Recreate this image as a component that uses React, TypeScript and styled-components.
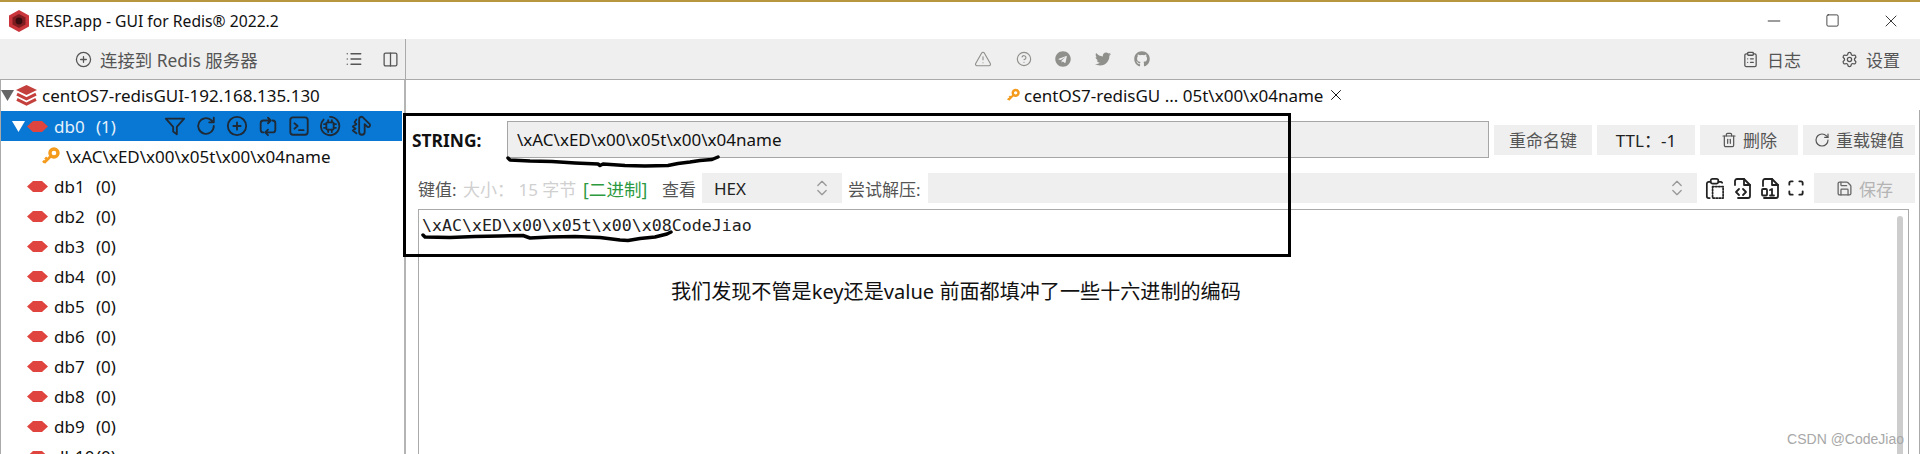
import { ReactNode } from "react";
import styled, { createGlobalStyle } from "styled-components";
import {
  CirclePlus,
  ClipboardList,
  CircleHelp,
  Columns2,
  List,
  Minus,
  RotateCw,
  Save,
  Settings,
  Square,
  Trash2,
  TriangleAlert,
  X,
} from "lucide-react";
import { FaGithub, FaTelegram, FaTwitter } from "react-icons/fa";

const GlobalStyle = createGlobalStyle`
  html, body {
    margin: 0;
    padding: 0;
    background: #fff;
  }
  * {
    box-sizing: border-box;
  }
`;

const FONT = `"Noto Sans", "Noto Sans CJK SC", sans-serif`;

const Page = styled.div`
  position: relative;
  width: 1920px;
  height: 454px;
  overflow: hidden;
  display: flex;
  flex-direction: column;
  background: #fff;
  color: #111;
  font-family: ${FONT};
  font-size: 17px;
`;

const TitleBar = styled.div`
  height: 39px;
  flex: none;
  border-top: 2px solid #b8963f;
  display: flex;
  align-items: center;
  padding-left: 9px;
  gap: 6px;
`;

const TitleText = styled.span`
  font-size: 15.7px;
  flex: 1;
`;

const WindowButtons = styled.div`
  display: flex;
  align-items: center;
  gap: 41px;
  padding-right: 19px;
  color: #111;
`;

const Toolbar = styled.div`
  height: 41px;
  flex: none;
  display: flex;
  background: #efefef;
  border-bottom: 1px solid #aaa;
`;

const ToolbarLeft = styled.div`
  width: 406px;
  flex: none;
  display: flex;
  align-items: center;
  padding-left: 75px;
  border-right: 1px solid #aaa;
  color: #555;
`;

const ConnectLabel = styled.span`
  margin-left: 8px;
  width: 245px;
  font-size: 17.4px;
  white-space: nowrap;
`;

const ToolbarSquare = styled.span`
  display: flex;
  margin-left: 19px;
`;

const ToolbarCenter = styled.div`
  flex: 1;
  display: flex;
  align-items: center;
  gap: 23.5px;
  padding-left: 568px;
  color: #8f8f8c;
`;

const ToolbarRight = styled.div`
  display: flex;
  align-items: center;
  gap: 8px;
  padding-right: 20px;
  color: #555;
`;

const ToolLabel = styled.span<{ $gap?: number }>`
  margin-right: ${(p) => p.$gap ?? 0}px;
`;

const Main = styled.div`
  flex: 1;
  display: flex;
  min-height: 0;
`;

const Sidebar = styled.div`
  width: 406px;
  flex: none;
  border-left: 1px solid #aaa;
  border-right: 2px solid #b4b4b4;
  padding-right: 2px;
  overflow: hidden;
`;

const ServerRow = styled.div`
  height: 31px;
  display: flex;
  align-items: center;
  gap: 2px;
  white-space: nowrap;
`;

const ServerName = styled.span`
  margin-left: 3px;
`;

const TreeRow = styled.div<{ $selected?: boolean; $indent: number }>`
  height: 30px;
  display: flex;
  align-items: center;
  padding-left: ${(p) => p.$indent}px;
  background: ${(p) => (p.$selected ? "#0878d4" : "transparent")};
  color: ${(p) => (p.$selected ? "#e6f1fb" : "#111")};
  white-space: nowrap;
`;

const ArrowSpacer = styled.span`
  width: 2px;
  flex: none;
`;

const DbName = styled.span`
  margin-left: 6px;
  width: 42px;
`;

const RowActions = styled.div`
  margin-left: 48px;
  display: flex;
  align-items: center;
  gap: 9px;
  color: #1f2a36;
`;

const KeyName = styled.span`
  margin-left: 6px;
`;

const Panel = styled.div`
  flex: 1;
  min-width: 0;
  display: flex;
  flex-direction: column;
`;

const TabRow = styled.div`
  height: 30px;
  flex: none;
  display: flex;
  align-items: center;
  gap: 4px;
  padding-left: 601px;
`;

const TabClose = styled.span`
  display: flex;
`;

const Content = styled.div`
  flex: 1;
  min-height: 0;
  display: flex;
  flex-direction: column;
  padding: 11px 10px 0 12px;
  border-right: 1px solid #aaa;
`;

const KeyLine = styled.div`
  height: 37px;
  flex: none;
  display: flex;
  align-items: center;
  gap: 5px;
  margin-left: -6px;
  margin-right: -6px;
`;

const TypeLabel = styled.span`
  font-family: "Noto Sans", sans-serif;
  font-weight: 700;
  font-size: 17.4px;
  width: 90px;
  flex: none;
`;

const KeyInput = styled.div`
  width: 982px;
  height: 37px;
  flex: none;
  background: #efefef;
  border: 1px solid #a6a6a6;
  display: flex;
  align-items: center;
  padding-left: 9px;
`;

const ActionButton = styled.div<{ $width: number; $dark?: boolean }>`
  width: ${(p) => p.$width}px;
  height: 30px;
  flex: none;
  background: #efefef;
  color: ${(p) => (p.$dark ? "#222" : "#555")};
  display: flex;
  align-items: center;
  justify-content: center;
  gap: 6px;
`;

const ValueLine = styled.div`
  height: 30px;
  flex: none;
  margin-top: 15px;
  margin-right: -6px;
  display: flex;
  align-items: center;
`;

const MutedLabel = styled.span<{ $width: number; $inset?: number }>`
  width: ${(p) => p.$width}px;
  padding-left: ${(p) => p.$inset ?? 0}px;
  flex: none;
  color: #555;
  white-space: nowrap;
`;

const SizeLabel = styled.span`
  width: 120px;
  flex: none;
  color: #d0d0d0;
  white-space: nowrap;
`;

const BinaryLabel = styled.span`
  width: 79px;
  flex: none;
  color: #2e9a3f;
  white-space: nowrap;
  font-size: 17.6px;
`;

const SelectBox = styled.div<{ $width: number }>`
  width: ${(p) => p.$width}px;
  height: 30px;
  flex: none;
  background: #efefef;
  display: flex;
  align-items: center;
  justify-content: space-between;
  padding: 0 10px 0 12px;
  color: #222;
`;

const ValueIcons = styled.div`
  display: flex;
  align-items: center;
  gap: 4px;
  margin-left: 6px;
  width: 111px;
  flex: none;
  color: #222;
`;

const SaveButton = styled.div`
  flex: 1;
  height: 30px;
  background: #efefef;
  color: #b4b4b4;
  display: flex;
  align-items: center;
  justify-content: center;
  gap: 6px;
`;

const SaveIcon = styled.span`
  display: flex;
  color: #666;
`;

const Editor = styled.div`
  position: relative;
  flex: 1;
  min-height: 0;
  margin-top: 6px;
  border: 1px solid #aaa;
  border-bottom: 0;
  padding: 5px 3px;
  font-family: "DejaVu Sans Mono", monospace;
  font-size: 16.6px;
  line-height: 22px;
  color: #222;
  white-space: pre;
`;

const Scrollbar = styled.div`
  position: absolute;
  top: 6px;
  right: 5px;
  bottom: 0;
  width: 6px;
  border-radius: 3px 3px 0 0;
  background: #cdcdcd;
`;

const Note = styled.div`
  position: absolute;
  left: 252px;
  top: 68px;
  font-family: ${FONT};
  font-size: 20.1px;
  line-height: 28px;
  color: #111;
`;

const Highlight = styled.div`
  position: absolute;
  left: 403px;
  top: 113px;
  width: 888px;
  height: 144px;
  border: 3px solid #000;
  pointer-events: none;
`;

const Scribble = styled.svg`
  position: absolute;
  left: 0;
  top: 0;
  pointer-events: none;
`;

const Watermark = styled.div`
  position: absolute;
  right: 16px;
  top: 429px;
  font-family: "Liberation Sans", sans-serif;
  font-size: 14px;
  line-height: 20px;
  color: #a8a8a8;
`;

const Glyph = ({ size = 22, width = 2, children }: { size?: number; width?: number; children: ReactNode }) => (
  <svg
    width={size}
    height={size}
    viewBox="0 0 24 24"
    fill="none"
    stroke="currentColor"
    strokeWidth={width}
    strokeLinecap="round"
    strokeLinejoin="round"
    style={{ flex: "none" }}
  >
    {children}
  </svg>
);

const AppLogo = () => (
  <svg width="20" height="22" viewBox="0 0 20 22" style={{ flex: "none" }}>
    <polygon points="10,0 20,5.5 20,16.5 10,22 0,16.5 0,5.5" fill="#c9353a" />
    <polygon points="10,4 16.5,7.500 16.5,14.500 10,18 3.5,14.500 3.5,7.500" fill="#7e1c20" />
    <circle cx="10" cy="11" r="3.400" fill="#3a0c0f" />
  </svg>
);

const StackIcon = () => (
  <svg width="21" height="21" viewBox="0 0 21 21" style={{ flex: "none" }}>
    <polygon points="10.500,0 21,5 10.500,10 0,5" fill="#c4403c" />
    <path d="M1 9.200l9.500 4.600 9.500-4.600M1 14.400l9.500 4.600 9.500-4.600" fill="none" stroke="#c4403c" strokeWidth="3" />
  </svg>
);

const DbIcon = () => (
  <svg width="21" height="13" viewBox="0 0 21 13" style={{ flex: "none" }}>
    <polygon points="6,1 15,1 21,6.500 15,12 6,12 0,6.500" fill="#e0443f" />
  </svg>
);

const KeyIcon = ({ small }: { small?: boolean }) => (
  <svg
    width={small ? 13 : 18}
    height={small ? 16 : 18}
    viewBox="0 0 17 17"
    fill="none"
    stroke="#f49a1c"
    style={{ flex: "none" }}
  >
    <circle cx="11.300" cy="5.700" r="3.800" strokeWidth="3.200" />
    <path d="M8.500 8.500L2 15M2.500 14.500l-1.500-1.500M5 12l-2-2" strokeWidth="2.600" />
  </svg>
);

const Arrow = ({ color }: { color: string }) => (
  <svg width="13" height="11" viewBox="0 0 13 11" style={{ flex: "none" }}>
    <polygon points="0,0 13,0 6.500,11" fill={color} />
  </svg>
);

const UpDown = ({ color = "#999" }: { color?: string }) => (
  <Glyph size={20} width={1.6}>
    <path d="M7 9l5-5 5 5" stroke={color} />
    <path d="M7 15l5 5 5-5" stroke={color} />
  </Glyph>
);

const ChipIcon = () => (
  <Glyph>
    <path d="M12 2a10 10 0 1 1-7 3" />
    <rect x="8" y="8" width="8" height="8" rx="1" />
    <path d="M10 5.500v2.500M14 5.500v2.500M10 16v2.500M14 16v2.500M5.500 10H8M5.500 14H8M16 10h2.500M16 14h2.500" />
  </Glyph>
);

const KnifeIcon = () => (
  <Glyph>
    <path d="M14 2.500l7.500 7.500a2 2 0 0 1-2.500 3L16 10v8.500a3 3 0 0 1-6 0V5a2.500 2.500 0 0 1 4-2.500z" />
    <path d="M7 5L5 8l2 2-4 2.500L6 15l-3 2 4 3" />
  </Glyph>
);

const ClipboardDashed = () => (
  <Glyph size={23} width={1.8}>
    <path d="M8 5H6a2 2 0 0 0-2 2v13a2 2 0 0 0 2 2h1" />
    <path d="M16 5h2a2 2 0 0 1 2 1" />
    <rect x="8" y="2" width="8" height="5" rx="2" />
    <rect x="10" y="10" width="11" height="12" strokeDasharray="1.500 1.700" />
  </Glyph>
);

const FileCode = () => (
  <Glyph size={24} width={1.8}>
    <path d="M5 9V5a2 2 0 0 1 2-2h7l6 6v11a2 2 0 0 1-2 2H8" />
    <path d="M14 3v6h6" />
    <path d="M9 13l-3 3 3 3M13 13l3 3-3 3" />
  </Glyph>
);

const FileBinary = () => (
  <Glyph size={24} width={1.8}>
    <path d="M5 10V5a2 2 0 0 1 2-2h7l6 6v11a2 2 0 0 1-2 2H6" />
    <path d="M14 3v6h6" />
    <rect x="4" y="13" width="5" height="6.500" rx="1" />
    <path d="M12 14l2-1v6.500M12 19.500h4" />
  </Glyph>
);

const FullscreenIcon = () => (
  <Glyph size={20} width={2.2}>
    <path d="M4 8V6a2 2 0 0 1 2-2h2M16 4h2a2 2 0 0 1 2 2v2M20 16v2a2 2 0 0 1-2 2h-2M8 20H6a2 2 0 0 1-2-2v-2" />
  </Glyph>
);

const DATABASES = ["db1", "db2", "db3", "db4", "db5", "db6", "db7", "db8", "db9", "db10"];

export default function App() {
  return (
    <Page>
      <GlobalStyle />
      <TitleBar>
        <AppLogo />
        <TitleText>RESP.app - GUI for Redis® 2022.2</TitleText>
        <WindowButtons>
          <Minus size={20} strokeWidth={1} />
          <Square size={15} strokeWidth={1.2} />
          <X size={20} strokeWidth={1} />
        </WindowButtons>
      </TitleBar>
      <Toolbar>
        <ToolbarLeft>
          <CirclePlus size={17} strokeWidth={1.8} />
          <ConnectLabel>连接到 Redis 服务器</ConnectLabel>
          <List size={18} strokeWidth={1.8} />
          <ToolbarSquare>
            <Columns2 size={17} strokeWidth={1.8} />
          </ToolbarSquare>
        </ToolbarLeft>
        <ToolbarCenter>
          <TriangleAlert size={18} strokeWidth={1.5} />
          <CircleHelp size={16} strokeWidth={1.7} />
          <FaTelegram size={16} />
          <FaTwitter size={16} />
          <FaGithub size={16} />
        </ToolbarCenter>
        <ToolbarRight>
          <ClipboardList size={17} strokeWidth={1.8} />
          <ToolLabel $gap={32}>日志</ToolLabel>
          <Settings size={17} strokeWidth={1.8} />
          <ToolLabel>设置</ToolLabel>
        </ToolbarRight>
      </Toolbar>
      <Main>
        <Sidebar>
          <ServerRow>
            <Arrow color="#666" />
            <StackIcon />
            <ServerName>centOS7-redisGUI-192.168.135.130</ServerName>
          </ServerRow>
          <TreeRow $selected $indent={11}>
            <Arrow color="#fff" />
            <ArrowSpacer />
            <DbIcon />
            <DbName>db0</DbName>
            <span>(1)</span>
            <RowActions>
              <Glyph>
                <path d="M2 4h20l-8 9v8l-4-3v-5z" />
              </Glyph>
              <Glyph>
                <path d="M20.500 12a8.500 8.500 0 1 1-3-6.500L20.500 8M20.500 3v5h-5" />
              </Glyph>
              <Glyph>
                <circle cx="12" cy="12" r="10" />
                <path d="M12 8v8M8 12h8" />
              </Glyph>
              <Glyph>
                <path d="M7 19a3 3 0 0 1-3-3V9a3 3 0 0 1 3-3h8M12 3l3 3-3 3" />
                <path d="M17 6a3 3 0 0 1 3 3v7a3 3 0 0 1-3 3H9M12 16l-3 3 3 3" />
              </Glyph>
              <Glyph>
                <rect x="2.500" y="2.500" width="19" height="19" rx="3" />
                <path d="M7 9l3.500 3-3.500 3M12 16.500h5" />
              </Glyph>
              <ChipIcon />
              <KnifeIcon />
            </RowActions>
          </TreeRow>
          <TreeRow $indent={41}>
            <KeyIcon />
            <KeyName>\xAC\xED\x00\x05t\x00\x04name</KeyName>
          </TreeRow>
          {DATABASES.map((db) => (
            <TreeRow key={db} $indent={26}>
              <DbIcon />
              <DbName>{db}</DbName>
              <span>(0)</span>
            </TreeRow>
          ))}
        </Sidebar>
        <Panel>
          <TabRow>
            <KeyIcon small />
            <span>centOS7-redisGU ... 05t\x00\x04name</span>
            <TabClose>
              <X size={18} strokeWidth={1.3} />
            </TabClose>
          </TabRow>
          <Content>
            <KeyLine>
              <TypeLabel>STRING:</TypeLabel>
              <KeyInput>\xAC\xED\x00\x05t\x00\x04name</KeyInput>
              <ActionButton $width={98}>重命名键</ActionButton>
              <ActionButton $width={98} $dark>
                TTL：-1
              </ActionButton>
              <ActionButton $width={98}>
                <Trash2 size={16} strokeWidth={1.8} />
                删除
              </ActionButton>
              <ActionButton $width={112}>
                <RotateCw size={16} strokeWidth={1.8} />
                重载键值
              </ActionButton>
            </KeyLine>
            <ValueLine>
              <MutedLabel $width={45}>键值:</MutedLabel>
              <SizeLabel>大小： 15 字节</SizeLabel>
              <BinaryLabel>[二进制]</BinaryLabel>
              <MutedLabel $width={40}>查看</MutedLabel>
              <SelectBox $width={140}>
                HEX
                <UpDown />
              </SelectBox>
              <MutedLabel $width={86} $inset={6}>
                尝试解压:
              </MutedLabel>
              <SelectBox $width={769}>
                <span />
                <UpDown />
              </SelectBox>
              <ValueIcons>
                <ClipboardDashed />
                <FileCode />
                <FileBinary />
                <FullscreenIcon />
              </ValueIcons>
              <SaveButton>
                <SaveIcon>
                  <Save size={17} strokeWidth={1.8} />
                </SaveIcon>
                保存
              </SaveButton>
            </ValueLine>
            <Editor>
              \xAC\xED\x00\x05t\x00\x08CodeJiao
              <Scrollbar />
              <Note>我们发现不管是key还是value 前面都填冲了一些十六进制的编码</Note>
            </Editor>
          </Content>
        </Panel>
      </Main>
      <Highlight />
      <Scribble width="1920" height="454" viewBox="0 0 1920 454" fill="none" stroke="#000" strokeLinecap="round" strokeLinejoin="round">
        <path
          d="M508 158L510 160L530 161L552 161.500L575 163L598 164L600 165.500L603 164L625 165.500L645 166L668 165.500L678 163.500L690 162L700 160.500L706 160L712 159.500L718 157"
          strokeWidth="3.500"
        />
        <path
          d="M423 235L425 237L450 237.500L475 236.500L500 236L523 235.500L530 238L550 237L575 236.500L600 237.500L620 240L628 240.500L640 238.500L655 237L667 234L671 232"
          strokeWidth="3.500"
        />
      </Scribble>
      <Watermark>CSDN @CodeJiao</Watermark>
    </Page>
  );
}
